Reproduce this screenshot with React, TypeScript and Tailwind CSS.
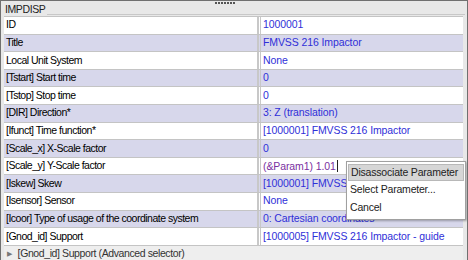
import { ReactNode } from "react"

type Row = {
  label: string
  value: ReactNode
}

const rows: Row[] = [
  { label: "ID", value: "1000001" },
  { label: "Title", value: "FMVSS 216 Impactor" },
  { label: "Local Unit System", value: "None" },
  { label: "[Tstart] Start time", value: "0" },
  { label: "[Tstop] Stop time", value: "0" },
  { label: "[DIR] Direction*", value: "3: Z  (translation)" },
  { label: "[Ifunct] Time function*", value: "[1000001] FMVSS 216 Impactor" },
  { label: "[Scale_x] X-Scale factor", value: "0" },
  {
    label: "[Scale_y] Y-Scale factor",
    value: (
      <span className="text-[#7a2fa0]">
        (&amp;Param1) 1.01<span className="ml-[1px] inline-block h-[12px] w-px translate-y-[2px] bg-[#222]" />
      </span>
    ),
  },
  { label: "[Iskew] Skew", value: "[1000001] FMVSS 216 Impactor" },
  { label: "[Isensor] Sensor", value: "None" },
  { label: "[Icoor] Type of usage of the coordinate system", value: "0: Cartesian coordinates" },
  { label: "[Gnod_id] Support", value: "[1000005] FMVSS 216 Impactor - guide" },
]

const App = () => {
  return (
    <div
      className="relative h-[260px] w-[468px] overflow-hidden border-x border-t border-[#707070] bg-[#e8e8e8] text-[10.5px] text-black"
      style={{ fontFamily: '"Liberation Sans", Arial, sans-serif' }}
    >
      {/* grip */}
      <div className="absolute left-[214px] top-[1px] flex gap-[1px]">
        {Array.from({ length: 7 }).map((_, i) => (
          <span key={i} className="h-[2px] w-[2px] bg-[#555]" />
        ))}
      </div>

      <div className="flex h-[15px] items-end pl-[4px] pr-[2px]">
        <span className="leading-[13px] tracking-[-0.4px] text-[#222]">IMPDISP</span>
        <span className="mb-[1px] ml-[2px] h-px flex-1 bg-[#c8c8c8]" />
      </div>

      <div className="ml-[3px] mr-[4px] border-t border-[#c4c4c4]">
        {rows.map((r, i) => (
          <div
            key={r.label}
            className={`flex h-[17.6px] border-b border-[#c4c4c4] ${i % 2 ? "bg-[#d7d7eb]" : "bg-white"}`}
          >
            <div className="flex w-[255px] items-center border-r-2 border-[#c8c8c8] pl-[2px] tracking-[-0.5px] whitespace-nowrap">
              {r.label}
            </div>
            <div className="ml-[1px] flex flex-1 items-center overflow-hidden border-l border-[#c8c8c8] pl-[2px] tracking-[-0.1px] whitespace-nowrap text-[#2f2fd8]">
              {r.value}
            </div>
          </div>
        ))}
      </div>

      <div className="ml-[3px] mr-[4px] flex h-[17px] items-center gap-[6px] bg-[#eeeeee] pl-[3px] tracking-[-0.4px] text-[#333]">
        <span className="text-[7px] text-[#777]">▶</span>
        <span>[Gnod_id] Support (Advanced selector)</span>
      </div>

      {/* context menu */}
      <div className="absolute left-[345px] top-[160px] w-[120px] border border-[#a0a0a0] bg-white py-[2px] tracking-[-0.2px] whitespace-nowrap text-[#222] shadow-[1px_1px_2px_rgba(0,0,0,0.3)]">
        <div className="mx-[1px] flex h-[17px] items-center border border-[#b8b8b8] bg-[#d6d6d6] pl-[2px]">
          Disassociate Parameter
        </div>
        <div className="flex h-[18px] items-center pl-[3px]">Select Parameter...</div>
        <div className="flex h-[18px] items-center pl-[3px]">Cancel</div>
      </div>
    </div>
  )
}

export default App
